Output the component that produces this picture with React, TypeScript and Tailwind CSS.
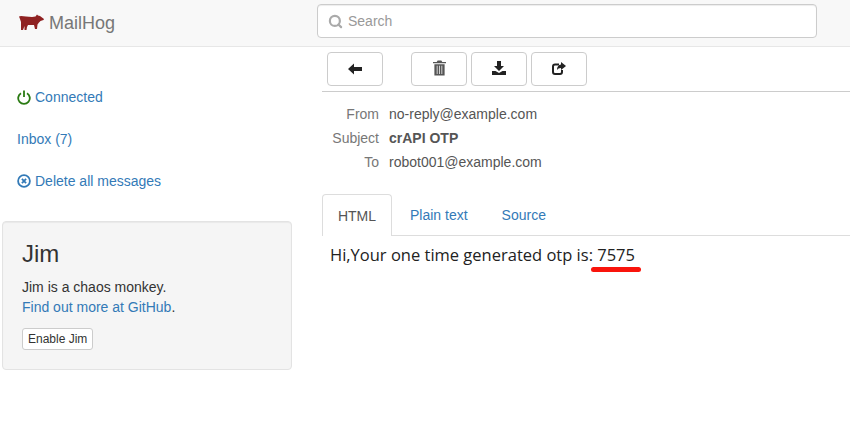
import { Search } from 'lucide-react'

const link = 'text-[#337ab7]'

function Pig() {
    return (
        <svg width="25" height="16" viewBox="0 0 25 16" className="mb-[2px] shrink-0">
            <path
                fill="#8f2121"
                d="M0 2.5 L2 2 L7 2.5 L13 3 L16.5 2.5 L18 0.5 L19 1.5 L21 2 L25 5 L24.5 6 L21.5 7 L20 8.5 L18.5 10.5 L18 15 L16 15 L15 11 L9 11 L8 13 L7.5 16 L5.5 16 L5.5 12 L4 16 L2 16 L2 8 L1 5 Z"
            />
        </svg>
    )
}

function PowerIcon() {
    return (
        <svg width="14" height="15" viewBox="0 0 14 15" className="shrink-0">
            <path
                d="M4 3.2 A5.8 5.8 0 1 0 10 3.2"
                fill="none"
                stroke="#2a7a12"
                strokeWidth="1.8"
            />
            <path d="M7 0.5 V7" fill="none" stroke="#2a7a12" strokeWidth="1.8" />
        </svg>
    )
}

function RemoveCircle() {
    return (
        <svg width="14" height="14" viewBox="0 0 14 14" className="shrink-0">
            <circle cx="7" cy="7" r="5.9" fill="none" stroke="#337ab7" strokeWidth="1.8" />
            <path d="M4.9 4.9 L9.1 9.1 M9.1 4.9 L4.9 9.1" stroke="#337ab7" strokeWidth="1.8" />
        </svg>
    )
}

function ToolButton({ children }: { children: React.ReactNode }) {
    return (
        <button className="flex h-[34px] w-14 items-center justify-center rounded border border-[#ccc] bg-white text-[#333]">
            {children}
        </button>
    )
}

function MetaRow({ label, value, bold }: { label: string; value: string; bold?: boolean }) {
    return (
        <div className="flex h-6 items-center">
            <div className="w-[47px] text-right text-[#777]">{label}</div>
            <div className={`ml-2.5 text-[#555] ${bold ? 'font-bold text-[#333]' : ''}`}>{value}</div>
        </div>
    )
}

export default function App() {
    return (
        <div className="min-h-screen bg-white font-['Liberation_Sans',Arial,sans-serif] text-sm text-[#333]">
            {/* Navbar */}
            <header className="flex h-[47px] items-start border-b border-[#e7e7e7] bg-[#f8f8f8]">
                <div className="flex h-[46px] w-[317px] items-center pl-[19px]">
                    <Pig />
                    <span className="ml-[5px] text-lg text-[#777]">MailHog</span>
                </div>
                <div className="mt-1 flex h-[34px] w-[500px] items-center rounded border border-[#ccc] bg-white pl-2.5 shadow-[inset_0_1px_1px_rgba(0,0,0,0.075)]">
                    <Search size={15} strokeWidth={3.5} className="text-[#aaa]" />
                    <span className="ml-[5px] text-[#999]">Search</span>
                </div>
            </header>

            <div className="flex">
                {/* Sidebar */}
                <aside className="w-[322px] shrink-0 pl-[2px] pr-[30px]">
                    <div className="pl-[15px] pt-10">
                        <div className="flex h-5 items-center gap-1">
                            <PowerIcon />
                            <span className={link}>Connected</span>
                        </div>
                        <div className="mt-[22px] flex h-5 items-center text-[#337ab7]">Inbox (7)</div>
                        <div className="mt-[22px] flex h-5 items-center gap-1">
                            <RemoveCircle />
                            <span className={link}>Delete all messages</span>
                        </div>
                    </div>
                    <div className="mt-[30px] h-[149px] rounded border border-[#e3e3e3] bg-[#f5f5f5] px-[19px] pt-[19px] shadow-[inset_0_1px_1px_rgba(0,0,0,0.05)]">
                        <h3 className="text-2xl leading-[26px] text-[#333]">Jim</h3>
                        <p className="mt-2.5 leading-5">Jim is a chaos monkey.</p>
                        <p className="leading-5">
                            <span className={link}>Find out more at GitHub</span>.
                        </p>
                        <button className="mt-[11px] h-[22px] rounded-[3px] border border-[#ccc] bg-white px-[5px] text-xs leading-[18px]">
                            Enable Jim
                        </button>
                    </div>
                </aside>

                {/* Message */}
                <main className="min-w-0 flex-1">
                    <div className="flex h-[45px] items-start border-b border-[#ccc] pl-[5px] pt-[5px]">
                        <ToolButton>
                            <svg width="14" height="12" viewBox="0 0 14 12" className="-mt-[1px]">
                                <path fill="#222" d="M0 6 L6 0.5 L6 4 L14 4 L14 8 L6 8 L6 11.5 Z" />
                            </svg>
                        </ToolButton>
                        <div className="ml-7 flex gap-1">
                            <ToolButton>
                                <svg width="13" height="16" viewBox="0 0 14 16" className="mb-0.5">
                                    <path
                                        fill="#555"
                                        d="M5 0 H9 L10 1.5 H14 V3 H0 V1.5 H4 Z M1.5 4 H12.5 V16 H1.5 Z"
                                    />
                                    <path stroke="#ddd" strokeWidth="1" d="M4.5 5.5 V14.5 M7 5.5 V14.5 M9.5 5.5 V14.5" />
                                </svg>
                            </ToolButton>
                            <ToolButton>
                                <svg width="14" height="14" viewBox="0 0 14 14" className="mb-0.5">
                                    <path fill="#222" d="M5 0 H9 V5 H12 L7 10 L2 5 H5 Z M0 10 H3.5 L7 12 L10.5 10 H14 V14 H0 Z" />
                                </svg>
                            </ToolButton>
                            <ToolButton>
                                <svg width="14" height="13" viewBox="0 0 14 13" className="mb-0.5">
                                    <path
                                        fill="none"
                                        stroke="#222"
                                        strokeWidth="2"
                                        d="M7 2.5 H3 Q1 2.5 1 4.5 V10 Q1 12 3 12 H8 Q10 12 10 10 V8"
                                    />
                                    <path fill="#222" d="M9 0 L14 4 L9 8 V6 Q6 6 5 8 Q5 3 9 2.5 Z" />
                                </svg>
                            </ToolButton>
                        </div>
                    </div>

                    <div className="pl-2.5 pt-2.5">
                        <MetaRow label="From" value="no-reply@example.com" />
                        <MetaRow label="Subject" value="crAPI OTP" bold />
                        <MetaRow label="To" value="robot001@example.com" />
                    </div>

                    {/* Tabs */}
                    <div className="mt-5 flex h-[42px] border-b border-[#ddd]">
                        <div className="-mb-px flex h-[42px] w-[70px] items-center justify-center rounded-t border border-b-0 border-[#ddd] bg-white text-[#555]">
                            HTML
                        </div>
                        <div className={`ml-[18px] flex items-center ${link}`}>Plain text</div>
                        <div className={`ml-[34px] flex items-center ${link}`}>Source</div>
                    </div>

                    <div className="pl-2 pt-[7px] font-['Open_Sans',sans-serif] text-[16.5px] leading-[23px] text-[#222]">
                        <span className="relative">
                            Hi,Your one time generated otp is: 7575
                            <span className="absolute -bottom-[6px] -right-[6px] h-[5px] w-[50px] rounded-full bg-[#f9140c]" />
                        </span>
                    </div>
                </main>
            </div>
        </div>
    )
}
